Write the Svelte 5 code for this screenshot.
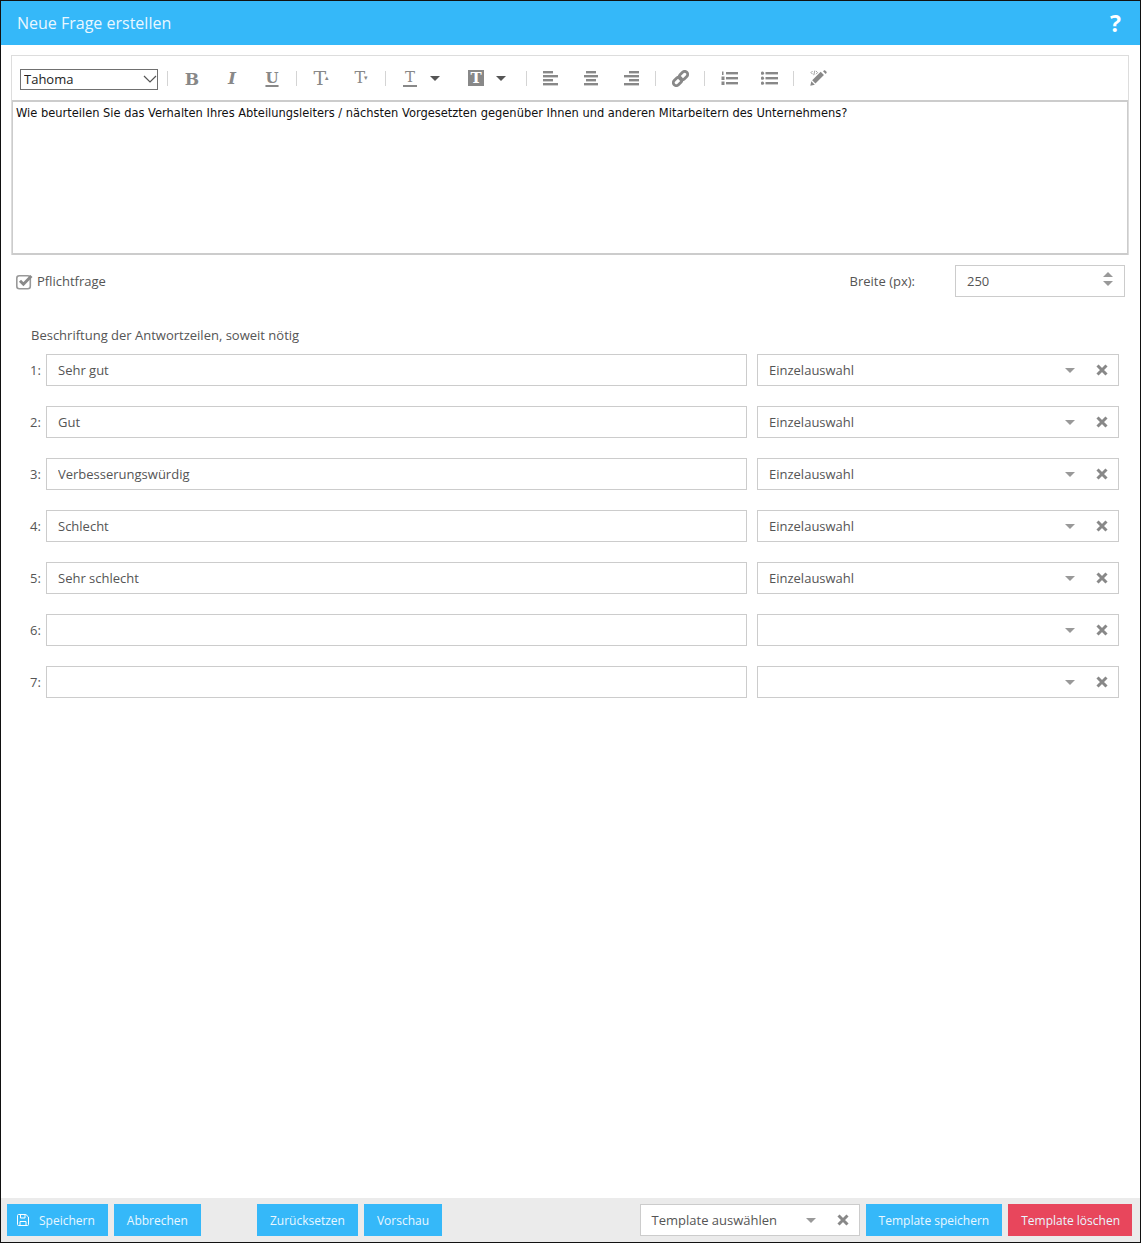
<script>
    const names = ['Sehr gut', 'Gut', 'Verbesserungswürdig', 'Schlecht', 'Sehr schlecht', '', ''];
    let rows = $state(names.map((label) => ({ label, type: label ? 'Einzelauswahl' : '' })));
    let required = $state(true);
    let width = $state(250);
    let font = $state('Tahoma');
    let question = 'Wie beurteilen Sie das Verhalten Ihres Abteilungsleiters / nächsten Vorgesetzten gegenüber Ihnen und anderen Mitarbeitern des Unternehmens?';
</script>

<div class="window">
    <header class="title">
        <h1>Neue Frage erstellen</h1>
        <span class="help">?</span>
    </header>

    <section class="editor">
        <div class="toolbar">
            <div class="font-select">
                <select bind:value={font}>
                    <option>Tahoma</option>
                    <option>Arial</option>
                </select>
                <svg class="chevron" width="14" height="8" viewBox="0 0 14 8"><path d="M1 1l6 6 6-6" fill="none" stroke="#555" stroke-width="1.2" /></svg>
            </div>
            <span class="sep first"></span>
            <span class="tool glyph bold">B</span>
            <span class="tool glyph italic">I</span>
            <span class="tool glyph under">U</span>
            <span class="sep"></span>
            <span class="tool glyph big">T<sup>▴</sup></span>
            <span class="tool glyph small">T<sup>▾</sup></span>
            <span class="sep"></span>
            <span class="tool split"><span class="glyph-t line">T</span><i class="caret dark"></i></span>
            <span class="tool split"><span class="glyph-t filled">T</span><i class="caret dark"></i></span>
            <span class="sep"></span>
            <span class="tool">
                <svg width="16" height="15" viewBox="0 0 16 15" fill="#888"><rect x="0" y="0" width="10" height="2.4" /><rect x="0" y="4" width="15" height="2.4" /><rect x="0" y="8" width="10" height="2.4" /><rect x="0" y="12" width="15" height="2.4" /></svg>
            </span>
            <span class="tool">
                <svg width="16" height="15" viewBox="0 0 16 15" fill="#888"><rect x="3" y="0" width="10" height="2.4" /><rect x="1" y="4" width="14" height="2.4" /><rect x="3" y="8" width="10" height="2.4" /><rect x="1" y="12" width="14" height="2.4" /></svg>
            </span>
            <span class="tool">
                <svg width="16" height="15" viewBox="0 0 16 15" fill="#888"><rect x="6" y="0" width="10" height="2.4" /><rect x="1" y="4" width="15" height="2.4" /><rect x="6" y="8" width="10" height="2.4" /><rect x="1" y="12" width="15" height="2.4" /></svg>
            </span>
            <span class="sep"></span>
            <span class="tool">
                <svg width="17" height="17" viewBox="0 0 17 17" fill="none" stroke="#888" stroke-width="2.8">
                    <rect x="-4.800" y="-3" width="9.600" height="6" rx="3" transform="translate(5.600 11.400) rotate(-45)" />
                    <rect x="-4.800" y="-3" width="9.600" height="6" rx="3" transform="translate(11.400 5.600) rotate(-45)" />
                </svg>
            </span>
            <span class="sep"></span>
            <span class="tool">
                <svg width="17" height="15" viewBox="0 0 17 15" fill="#888">
                    <rect x="5" y="1" width="12" height="2.4" /><rect x="5" y="6" width="12" height="2.4" /><rect x="5" y="11" width="12" height="2.4" />
                    <rect x="1" y="0.500" width="1.500" height="3.500" /><rect x="0.500" y="5.500" width="3" height="3.500" /><rect x="0.500" y="10.500" width="3" height="3.500" />
                </svg>
            </span>
            <span class="tool">
                <svg width="17" height="15" viewBox="0 0 17 15" fill="#888">
                    <rect x="4.500" y="1" width="12.500" height="2.400" /><rect x="4.500" y="6" width="12.500" height="2.400" /><rect x="4.500" y="11" width="12.500" height="2.400" />
                    <circle cx="1.500" cy="2.200" r="1.600" /><circle cx="1.500" cy="7.200" r="1.600" /><circle cx="1.500" cy="12.200" r="1.600" />
                </svg>
            </span>
            <span class="sep"></span>
            <span class="tool">
                <svg width="17" height="16" viewBox="0 0 17 16">
                    <path d="M3.800 11.800L12.300 3.300" fill="none" stroke="#888" stroke-width="4.600" />
                    <path d="M1.300 11.200l3.500 3.500-4.500 1z" fill="#888" />
                    <path d="M13 1.300l1-.8c.4-.3.800-.3 1.200 0l1.300 1.300c.3.400.3.800 0 1.200l-.8 1z" fill="#888" />
                    <path d="M2.600 1L1 2.600l1.600 1.600M4.800.6L3.800 5.200M6 1l1.600 1.600L6 4.200" fill="none" stroke="#888" stroke-width=".8" />
                </svg>
            </span>
        </div>
        <div class="content">{question}</div>
    </section>

    <div class="options">
        <label class="check">
            <input type="checkbox" bind:checked={required} />
            <svg width="18" height="17" viewBox="0 0 18 17">
                <rect x="1.800" y="2.800" width="13.500" height="13" rx="2.500" fill="none" stroke="#999" stroke-width="1.600" />
                {#if required}<path d="M5 7.800l3.400 3.400L16.400 3" fill="none" stroke="#8a8a8a" stroke-width="3" />{/if}
            </svg>
            Pflichtfrage
        </label>
        <span class="width-label">Breite (px):</span>
        <div class="spinner">
            <input class="field" type="text" bind:value={width} />
            <span class="arrows"><i class="up"></i><i class="caret"></i></span>
        </div>
    </div>

    <main class="answers">
        <p class="hint">Beschriftung der Antwortzeilen, soweit nötig</p>
        {#each rows as row, i}
            <div class="row">
                <span class="num">{i + 1}:</span>
                <input class="field text" type="text" bind:value={row.label} />
                <div class="combo">
                    <span class="combo-value">{row.type}</span>
                    <i class="caret"></i>
                    <button class="clear" aria-label="Leeren" onclick={() => (row.type = '')}>
                        <svg width="12" height="12" viewBox="0 0 12 12"><path d="M1.500 1.500l9 9M10.500 1.500l-9 9" stroke="#888" stroke-width="3" /></svg>
                    </button>
                </div>
            </div>
        {/each}
    </main>

    <footer class="footer">
        <div class="group">
            <button class="btn save">
                <svg width="12" height="12" viewBox="0 0 12 12" fill="none" stroke="#fff"><path d="M1.500.5h7.400L11.500 3v7.500a1 1 0 0 1-1 1h-9a1 1 0 0 1-1-1v-9a1 1 0 0 1 1-1z" /><path d="M3.500 1v3h4.500V1M3 11.500V7.500h6v4" /></svg>
                Speichern
            </button>
            <button class="btn">Abbrechen</button>
            <button class="btn spaced">Zurücksetzen</button>
            <button class="btn">Vorschau</button>
        </div>
        <div class="group">
            <div class="combo template">
                <span class="combo-value">Template auswählen</span>
                <i class="caret"></i>
                <button class="clear" aria-label="Leeren">
                    <svg width="12" height="12" viewBox="0 0 12 12"><path d="M1.500 1.500l9 9M10.500 1.500l-9 9" stroke="#888" stroke-width="3" /></svg>
                </button>
            </div>
            <button class="btn">Template speichern</button>
            <button class="btn danger">Template löschen</button>
        </div>
    </footer>
</div>

<style>
    :global(body) {
        font-family: "Open Sans", sans-serif;
        font-size: 13px;
        color: #555;
        background: #fff;
    }
    * {
        box-sizing: border-box;
    }
    .window {
        display: flex;
        flex-direction: column;
        height: 1243px;
        border: 1px solid #111;
    }
    .title {
        display: flex;
        align-items: center;
        justify-content: space-between;
        height: 44px;
        padding: 0 16px;
        background: #35b8f9;
        color: #fff;
    }
    h1 {
        margin: 0;
        font-size: 16px;
        font-weight: 400;
        color: #e9f7ff;
    }
    .help {
        font-size: 23px;
        font-weight: 700;
        margin-right: 3px;
    }
    .editor {
        margin: 10px 11px 0 10px;
        height: 200px;
        border: 1px solid #ddd;
        border-bottom: none;
        display: flex;
        flex-direction: column;
    }
    .toolbar {
        display: flex;
        align-items: center;
        height: 44px;
        padding: 0 0 0 8px;
    }
    .font-select {
        position: relative;
        width: 138px;
        height: 21px;
        margin-top: 2px;
    }
    .font-select select {
        appearance: none;
        width: 100%;
        height: 100%;
        padding: 0 0 0 3px;
        border: 1px solid #707070;
        background: #fff;
        font-family: "Open Sans", sans-serif;
        font-size: 13px;
        color: #222;
    }
    .chevron {
        position: absolute;
        right: 1px;
        top: 6px;
    }
    .sep {
        width: 1px;
        height: 15px;
        margin: 0 4px;
        background: #d4d4d4;
    }
    .sep.first {
        margin-left: 9px;
    }
    .tool {
        display: inline-flex;
        align-items: center;
        justify-content: center;
        width: 40px;
        color: #888;
    }
    .glyph {
        font-family: "DejaVu Serif", serif;
        font-size: 16px;
        line-height: 20px;
    }
    .bold {
        font-weight: 700;
        font-size: 17px;
        line-height: 22px;
        padding-top: 2px;
    }
    .italic {
        font-style: italic;
        font-weight: 700;
        font-size: 17px;
    }
    .under {
        font-weight: 700;
        font-size: 15px;
        text-decoration: underline;
        text-decoration-thickness: 2px;
        text-underline-offset: 2px;
    }
    .big {
        font-size: 19px;
    }
    .small {
        font-size: 16px;
    }
    sup {
        font-size: 7px;
        line-height: 0;
        vertical-align: 15px;
        margin-left: -1px;
    }
    .split {
        width: 66px;
        justify-content: flex-start;
        padding-left: 13px;
    }
    .glyph-t {
        display: inline-block;
        width: 14px;
        font-family: "DejaVu Serif", serif;
        font-size: 15px;
        line-height: 16px;
        text-align: center;
        margin-right: 13px;
    }
    .line {
        border-bottom: 2px solid #888;
        height: 18px;
    }
    .filled {
        width: 16px;
        height: 16px;
        margin-left: -1px;
        margin-right: 12px;
        background: #888;
        color: #fff;
        font-weight: 700;
    }
    .caret {
        display: inline-block;
        width: 0;
        height: 0;
        border: 5px solid transparent;
        border-top: 5px solid #999;
        border-bottom: none;
    }
    .caret.dark {
        border-top-color: #555;
    }
    .content {
        flex: 1;
        padding: 3px 3px;
        border: 2px solid #ccc;
        border-left-width: 1px;
        border-right-width: 1px;
        font-family: "DejaVu Sans", sans-serif;
        font-size: 11.46px;
        line-height: 17px;
        color: #111;
    }
    .options {
        display: flex;
        align-items: center;
        height: 32px;
        margin: 10px 15px 0 14px;
    }
    .check {
        display: flex;
        align-items: center;
        gap: 4px;
    }
    .check input {
        position: absolute;
        opacity: 0;
    }
    .width-label {
        margin-left: auto;
        margin-right: 40px;
    }
    .spinner {
        position: relative;
        width: 170px;
    }
    .field {
        width: 100%;
        height: 32px;
        padding: 0 11px;
        border: 1px solid #ccc;
        background: #fff;
        font-family: "Open Sans", sans-serif;
        font-size: 13px;
        color: #555;
        outline: none;
    }
    .arrows {
        position: absolute;
        right: 12px;
        top: 7px;
        display: flex;
        flex-direction: column;
        gap: 4px;
    }
    .up {
        display: block;
        width: 0;
        height: 0;
        border: 5px solid transparent;
        border-bottom: 5px solid #999;
        border-top: none;
    }
    .answers {
        flex: 1;
        padding: 0 21px 0 29px;
    }
    .hint {
        margin: 29px 0 10px 1px;
        line-height: 18px;
    }
    .row {
        display: flex;
        align-items: center;
        margin-bottom: 20px;
    }
    .num {
        width: 16px;
    }
    .text {
        width: 701px;
    }
    .combo {
        display: flex;
        align-items: center;
        width: 362px;
        height: 32px;
        margin-left: 10px;
        padding: 0 10px 0 11px;
        border: 1px solid #ccc;
        background: #fff;
    }
    .combo-value {
        flex: 1;
    }
    .clear {
        display: flex;
        margin-left: 21px;
        padding: 0;
        border: none;
        background: none;
    }
    .footer {
        display: flex;
        align-items: center;
        justify-content: space-between;
        height: 44px;
        padding: 0 8px 0 6px;
        background: #ebebeb;
    }
    .group {
        display: flex;
        gap: 6px;
    }
    .btn {
        display: flex;
        align-items: center;
        height: 32px;
        padding: 0 13px;
        border: none;
        background: #35b8f9;
        color: #e9f7ff;
        font-family: "Open Sans", sans-serif;
        font-size: 12px;
    }
    .save {
        gap: 10px;
        padding: 0 13px 0 10px;
    }
    .spaced {
        margin-left: 50px;
    }
    .danger {
        background: #e8465c;
        padding-right: 12px;
    }
    .template {
        width: 220px;
        margin-left: 0;
    }
</style>
